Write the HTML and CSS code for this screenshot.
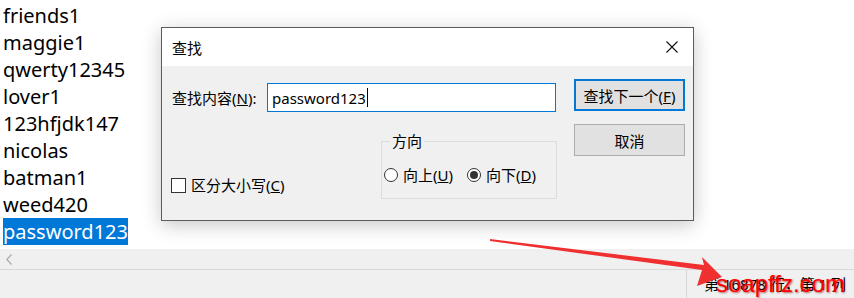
FILE: index.html
```html
<!DOCTYPE html>
<html lang="zh-CN">

<head>
  <meta charset="UTF-8">
  <title>记事本 - 查找</title>
  <link rel="stylesheet" href="styles.css">
</head>

<body>
  <div class="editor">
    <div class="lines">
      <div>friends1</div>
      <div>maggie1</div>
      <div>qwerty12345</div>
      <div>lover1</div>
      <div>123hfjdk147</div>
      <div>nicolas</div>
      <div>batman1</div>
      <div>weed420</div>
      <div><span class="sel">password123</span></div>
    </div>

    <!-- find dialog floats over the text -->
    <div class="dialog">
      <div class="dlg-title">
        <span>查找</span>
        <svg class="close" width="12" height="12" viewBox="0 0 12 12">
          <path d="M0.5 0.5 L11.5 11.5 M11.5 0.5 L0.5 11.5" stroke="#111" stroke-width="1.1" fill="none" />
        </svg>
      </div>
      <div class="dlg-body">
        <div class="dlg-main">
          <div class="find-row">
            <span class="find-label">查找内容(<u>N</u>):</span>
            <div class="find-input">password123<span class="caret"></span></div>
          </div>
          <div class="opts-row">
            <label class="check"><span class="box"></span><span>区分大小写(<u>C</u>)</span></label>
            <fieldset class="dir">
              <legend>方向</legend>
              <div class="radios">
                <span class="radio"><span class="dot"></span><span>向上(<u>U</u>)</span></span>
                <span class="radio on"><span class="dot"></span><span>向下(<u>D</u>)</span></span>
              </div>
            </fieldset>
          </div>
        </div>
        <div class="dlg-buttons">
          <button class="btn default">查找下一个(<u>F</u>)</button>
          <button class="btn">取消</button>
        </div>
      </div>
    </div>
  </div>

  <div class="hscroll">
    <svg class="left-arrow" width="6" height="11" viewBox="0 0 6 11">
      <path d="M5.5 0.5 L0.8 5.5 L5.5 10.5" stroke="#a8a8a8" stroke-width="1.2" fill="none" />
    </svg>
  </div>

  <div class="status">
    <div class="status-pos">第 16878 行，第 1 列</div>
  </div>

  <!-- red annotation on top of the screenshot -->
  <svg class="annot" width="854" height="298" viewBox="0 0 854 298">
    <polygon points="490,239 704,265 702,257 722,277 697,286 702,270 490,241" fill="#f03030" />
  </svg>
  <span class="watermark">soapffz.com</span>
</body>

</html>
```

FILE: styles.css
```css
body {
  margin: 0;
  width: 854px;
  height: 298px;
  overflow: hidden;
  background: #ffffff;
  font-family: "Noto Sans", "Noto Sans CJK SC", sans-serif;
  color: #000000;
}

/* Editor area */
.editor {
  position: relative;
  height: 249px;
  overflow: hidden;
}

.lines {
  padding: 2px 0 0 3px;
  font-size: 20px;
  line-height: 27px;
}

.sel {
  background: #0078d7;
  color: #ffffff;
}

/* Find dialog */
.dialog {
  position: absolute;
  left: 161px;
  top: 27px;
  width: 533px;
  height: 194px;
  box-sizing: border-box;
  border: 1px solid #5c5c5c;
  background: #f0f0f0;
  box-shadow: 0 4px 18px rgba(0, 0, 0, 0.22);
  font-size: 15px;
}

.dlg-title {
  display: flex;
  align-items: center;
  justify-content: space-between;
  height: 38px;
  padding: 0 15px 0 10px;
  background: #ffffff;
}

.dlg-body {
  display: flex;
  gap: 17px;
  padding: 0 8px 0 10px;
}

.dlg-main {
  flex: 1;
}

.find-row {
  display: flex;
  align-items: center;
  margin-top: 17px;
}

.find-label {
  width: 95px;
}

.find-input {
  display: flex;
  align-items: center;
  width: 289px;
  height: 29px;
  box-sizing: border-box;
  border: 1px solid #0078d7;
  background: #ffffff;
  padding-left: 4px;
}

.caret {
  display: inline-block;
  width: 1px;
  height: 19px;
  margin-left: 1px;
  background: #000000;
}

.opts-row {
  display: flex;
  justify-content: space-between;
  align-items: flex-end;
  margin-top: 19px;
}

.check {
  display: flex;
  align-items: center;
  gap: 5px;
  margin-bottom: 4px;
  margin-left: -1px;
  line-height: 20px;
}

.box {
  width: 15px;
  height: 15px;
  box-sizing: border-box;
  border: 1px solid #333333;
  background: #ffffff;
}

.dir {
  width: 176px;
  box-sizing: border-box;
  margin: 0;
  padding: 14px 0 13px 2px;
  border: 1px solid #dcdcdc;
}

.dir legend {
  margin-left: 6px;
  padding: 0 2px;
  line-height: 20px;
}

.radios {
  display: flex;
  gap: 14px;
  line-height: 20px;
}

.radio {
  display: flex;
  align-items: center;
  gap: 5px;
}

.dot {
  position: relative;
  width: 14px;
  height: 14px;
  box-sizing: border-box;
  border: 1px solid #333333;
  border-radius: 50%;
  background: #ffffff;
}

.radio.on .dot::after {
  content: "";
  position: absolute;
  left: 2px;
  top: 2px;
  width: 8px;
  height: 8px;
  border-radius: 50%;
  background: #333333;
}

.dlg-buttons {
  display: flex;
  flex-direction: column;
  gap: 13px;
  padding-top: 13px;
}

.btn {
  width: 111px;
  height: 32px;
  box-sizing: border-box;
  margin: 0;
  padding: 0;
  border: 1px solid #adadad;
  background: #e1e1e1;
  font-family: inherit;
  font-size: 15px;
  color: #000000;
}

.btn.default {
  border: 2px solid #0078d7;
}

/* Bottom bars */
.hscroll {
  display: flex;
  align-items: center;
  height: 20px;
  background: #f0f0f0;
  border-bottom: 1px solid #d9d9d9;
}

.left-arrow {
  margin-left: 6px;
}

.status {
  display: flex;
  justify-content: flex-end;
  height: 28px;
  background: #f0f0f0;
}

.status-pos {
  width: 168px;
  box-sizing: border-box;
  border-left: 1px solid #d9d9d9;
  padding-left: 17px;
  font-size: 15px;
  line-height: 28px;
  white-space: nowrap;
}

/* Annotation overlay */
.annot {
  position: absolute;
  left: 0;
  top: 0;
}

.watermark {
  position: absolute;
  left: 716px;
  top: 270px;
  font-family: "Liberation Sans", sans-serif;
  font-size: 24px;
  line-height: 28px;
  color: #ff0000;
  text-shadow: 1px 1px 2px rgba(120, 0, 0, 0.6);
}
```
